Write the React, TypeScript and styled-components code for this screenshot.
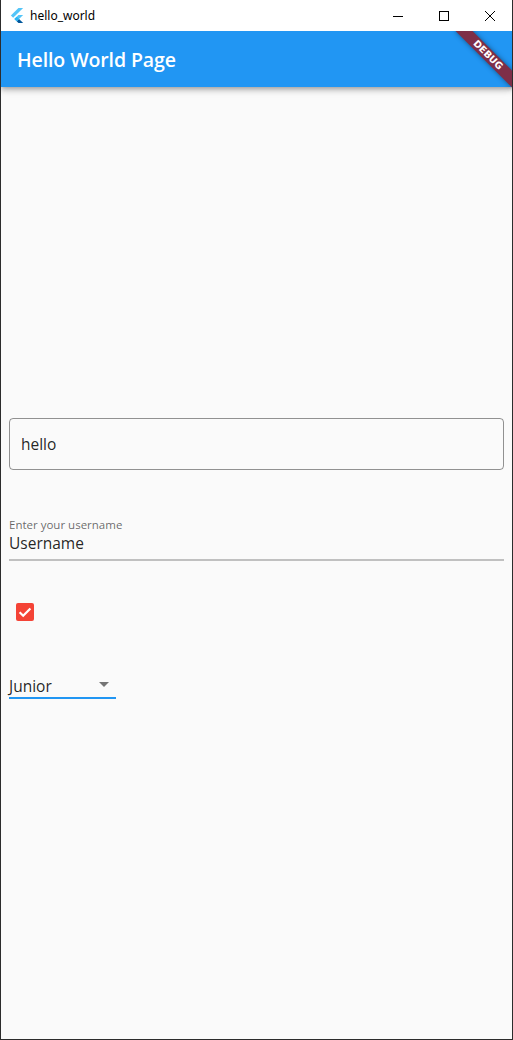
import React from "react";
import styled, { createGlobalStyle } from "styled-components";

const Global = createGlobalStyle`
  html, body { margin: 0; padding: 0; background: #ffffff; }
  * { box-sizing: border-box; }
`;

const Frame = styled.div`
  width: 513px;
  height: 1040px;
  display: flex;
  flex-direction: column;
  border-left: 1px solid #2c2c2c;
  border-right: 1px solid #2c2c2c;
  border-bottom: 1px solid #2c2c2c;
  font-family: "Open Sans", "Noto Sans", sans-serif;
  overflow: hidden;
`;

const TitleBar = styled.div`
  height: 31px;
  flex: none;
  background: #ffffff;
  display: flex;
  align-items: center;
  padding-left: 9px;
`;

const AppIcon = styled.svg`
  width: 14px;
  height: 17px;
  margin-right: 6px;
  margin-top: -1px;
`;

const WindowTitle = styled.span`
  font-family: "Noto Sans", "Open Sans", sans-serif;
  font-size: 12px;
  color: #000000;
  flex: 1;
`;

const Controls = styled.div`
  display: flex;
  height: 100%;
`;

const ControlButton = styled.div<{ $w: number }>`
  width: ${(p) => p.$w}px;
  height: 100%;
  display: flex;
  align-items: center;
  justify-content: center;
`;

const AppArea = styled.div`
  position: relative;
  flex: 1;
  display: flex;
  flex-direction: column;
  background: #fafafa;
  overflow: hidden;
`;

const AppBar = styled.div`
  height: 56px;
  flex: none;
  background: #2196f3;
  display: flex;
  align-items: center;
  padding-left: 16px;
  box-shadow: 0 2px 4px -1px rgba(0, 0, 0, 0.2), 0 4px 5px 0 rgba(0, 0, 0, 0.14),
    0 1px 10px 0 rgba(0, 0, 0, 0.12);
  z-index: 1;
`;

const AppTitle = styled.h1`
  margin: 0;
  font-family: "Open Sans", "Noto Sans", sans-serif;
  font-size: 19.5px;
  font-weight: 600;
  color: #ffffff;
  letter-spacing: -0.1px;
`;

const Banner = styled.div`
  position: absolute;
  top: 24px;
  right: -16px;
  width: 80px;
  height: 12px;
  margin-top: -6px;
  transform: rotate(45deg);
  background: #7e2f48;
  box-shadow: 0 0 5px rgba(0, 0, 0, 0.45);
  display: flex;
  align-items: center;
  justify-content: center;
  z-index: 5;
`;

const BannerText = styled.span`
  font-family: "DejaVu Sans", "Liberation Sans", sans-serif;
  font-size: 9.5px;
  font-weight: 700;
  line-height: 12px;
  color: #ffffff;
`;

const Body = styled.div`
  flex: 1;
  display: flex;
  flex-direction: column;
  padding: 331px 8px 0;
`;

const OutlinedField = styled.div`
  height: 52px;
  border: 1px solid rgba(0, 0, 0, 0.42);
  border-radius: 4px;
  display: flex;
  align-items: center;
  padding: 0 11px;
  font-family: "Open Sans", "Noto Sans", sans-serif;
  font-size: 15.5px;
  color: rgba(0, 0, 0, 0.87);
`;

const UnderlineField = styled.div`
  margin-top: 47px;
  display: flex;
  flex-direction: column;
  border-bottom: 2px solid #c0c0c0;
  padding-bottom: 6px;
`;

const FloatingLabel = styled.span`
  font-family: "Open Sans", "Noto Sans", sans-serif;
  font-size: 11.5px;
  line-height: 16px;
  color: rgba(0, 0, 0, 0.6);
`;

const FieldValue = styled.span`
  font-family: "Open Sans", "Noto Sans", sans-serif;
  font-size: 15.5px;
  line-height: 20px;
  color: rgba(0, 0, 0, 0.87);
`;

const CheckRow = styled.div`
  margin-top: 42px;
  padding-left: 7px;
  display: flex;
`;

const CheckBox = styled.div`
  width: 18px;
  height: 18px;
  border-radius: 2px;
  background: #f44336;
  display: flex;
  align-items: center;
  justify-content: center;
`;

const Dropdown = styled.div`
  margin-top: 52px;
  width: 107px;
  height: 26px;
  display: flex;
  align-items: flex-start;
  border-bottom: 2px solid #2196f3;
  padding-top: 3px;
`;

const DropdownValue = styled.span`
  flex: 1;
  font-family: "Open Sans", "Noto Sans", sans-serif;
  font-size: 15.5px;
  line-height: 20px;
  color: rgba(0, 0, 0, 0.87);
`;

const DropArrow = styled.svg`
  width: 10px;
  height: 5px;
  margin-top: 6px;
  margin-right: 7px;
`;

export default function App() {
  return (
    <>
      <Global />
      <Frame>
        <TitleBar>
          <AppIcon viewBox="0 0 166 202">
            <path fill="#54C5F8" d="M37.7 128.9L9.8 101 100.4 10.4h55.8z" />
            <path fill="#54C5F8" d="M156.2 94h-55.8l-48.8 48.8 27.9 27.9z" />
            <path fill="#01579B" d="M79.5 170.7l20.9 20.9h55.8l-48.8-48.8z" />
            <path fill="#29B6F6" d="M51.6 142.8l27.9-27.9 27.9 27.9-27.9 27.9z" />
          </AppIcon>
          <WindowTitle>hello_world</WindowTitle>
          <Controls>
            <ControlButton $w={46}>
              <svg width="10" height="10" viewBox="0 0 10 10">
                <line x1="0" y1="5.5" x2="10" y2="5.5" stroke="#000" strokeWidth="1" />
              </svg>
            </ControlButton>
            <ControlButton $w={46}>
              <svg width="10" height="10" viewBox="0 0 10 10">
                <rect x="0.5" y="0.5" width="9" height="9" fill="none" stroke="#000" strokeWidth="1" />
              </svg>
            </ControlButton>
            <ControlButton $w={45}>
              <svg width="10" height="10" viewBox="0 0 10 10">
                <path d="M0 0L10 10M10 0L0 10" stroke="#000" strokeWidth="1" />
              </svg>
            </ControlButton>
          </Controls>
        </TitleBar>
        <AppArea>
          <AppBar>
            <AppTitle>Hello World Page</AppTitle>
          </AppBar>
          <Banner>
            <BannerText>DEBUG</BannerText>
          </Banner>
          <Body>
            <OutlinedField>hello</OutlinedField>
            <UnderlineField>
              <FloatingLabel>Enter your username</FloatingLabel>
              <FieldValue>Username</FieldValue>
            </UnderlineField>
            <CheckRow>
              <CheckBox>
                <svg width="18" height="18" viewBox="0 0 18 18">
                  <path d="M3.6 9.2l3.6 3.6 7.2-7.4" fill="none" stroke="#fff" strokeWidth="2.2" />
                </svg>
              </CheckBox>
            </CheckRow>
            <Dropdown>
              <DropdownValue>Junior</DropdownValue>
              <DropArrow viewBox="0 0 10 5">
                <path d="M0 0h10L5 5z" fill="#757575" />
              </DropArrow>
            </Dropdown>
          </Body>
        </AppArea>
      </Frame>
    </>
  );
}
